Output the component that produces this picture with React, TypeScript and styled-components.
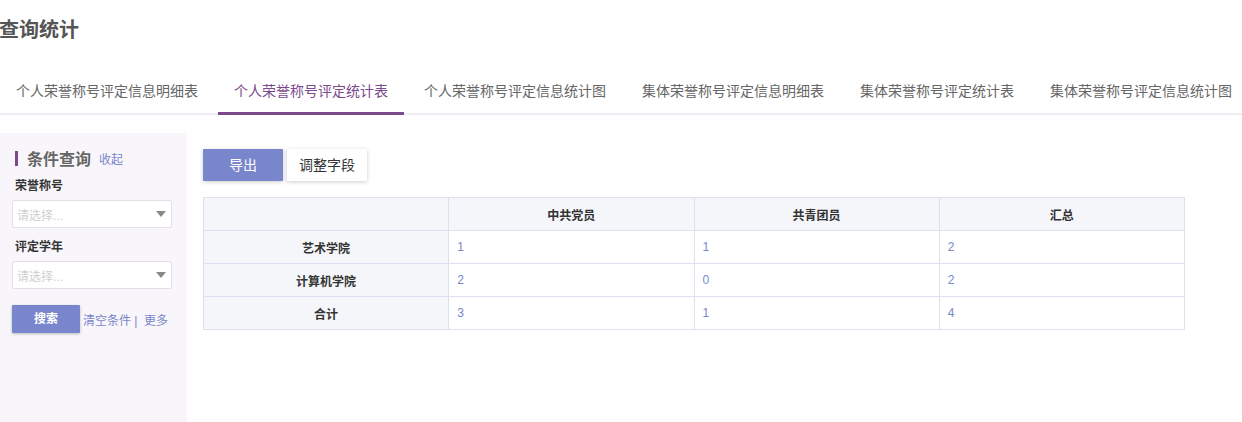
import styled, { createGlobalStyle } from 'styled-components';

const GlobalStyle = createGlobalStyle`
  html, body {
    margin: 0;
    padding: 0;
    background: #fff;
    font-family: "Liberation Sans", "Noto Sans CJK SC", sans-serif;
  }
  * { box-sizing: border-box; }
`;

const accent = '#7986cb';
const purple = '#7b4a8c';

const Page = styled.div`
  width: 1242px;
  height: 422px;
  overflow: hidden;
  display: flex;
  flex-direction: column;
`;

const Title = styled.h1`
  margin: 0;
  height: 60px;
  line-height: 60px;
  font-size: 20px;
  font-weight: bold;
  color: #555;
  margin-left: -1px;
`;

const TabBar = styled.div`
  margin-top: 9px;
  display: flex;
  border-bottom: 2px solid #f2ecf5;
`;

const Tab = styled.div<{ $active?: boolean }>`
  height: 46px;
  line-height: 44px;
  padding: 0 16px;
  margin-right: 4px;
  font-size: 14px;
  white-space: nowrap;
  color: ${(p) => (p.$active ? purple : '#666')};
  border-bottom: 3px solid ${(p) => (p.$active ? purple : 'transparent')};
  margin-bottom: -2px;
`;

const Body = styled.div`
  flex: 1;
  display: flex;
  margin-top: 18px;
`;

const Sidebar = styled.aside`
  width: 187px;
  flex-shrink: 0;
  background: #f8f6fa;
  padding: 16px 15px 0 12px;
`;

const SideTitle = styled.div`
  display: flex;
  align-items: center;
  height: 18px;
  padding-left: 3px;
`;

const Bar = styled.span`
  width: 3px;
  height: 15px;
  background: ${purple};
  margin-right: 9px;
`;

const SideHeading = styled.span`
  font-size: 16px;
  font-weight: bold;
  color: #666;
`;

const Link = styled.span`
  font-size: 12px;
  color: ${accent};
  margin-left: 8px;
`;

const Label = styled.div`
  margin-top: 10px;
  padding-left: 3px;
  line-height: 18px;
  font-size: 12px;
  font-weight: bold;
  color: #333;
`;

const Select = styled.div`
  margin-top: 5px;
  height: 28px;
  background: #fff;
  border: 1px solid #e3dfe8;
  border-radius: 2px;
  display: flex;
  align-items: center;
  justify-content: space-between;
  padding: 0 5px 0 4px;
  font-size: 12px;
  color: #cfcfcf;
`;

const Caret = styled.span`
  width: 0;
  height: 0;
  border-left: 5px solid transparent;
  border-right: 5px solid transparent;
  border-top: 6px solid #888;
`;

const ActionRow = styled.div`
  margin-top: 16px;
  display: flex;
  align-items: center;
`;

const SearchButton = styled.div`
  width: 68px;
  height: 28px;
  line-height: 28px;
  text-align: center;
  background: ${accent};
  color: #fff;
  font-size: 12px;
  font-weight: bold;
  border-radius: 1px;
  box-shadow: 0 1px 3px rgba(0, 0, 0, 0.25);
`;

const TextLink = styled.span`
  font-size: 12px;
  color: ${accent};
  margin-left: 3px;
  white-space: nowrap;
`;

const Main = styled.main`
  flex: 1;
  padding: 16px 0 0 16px;
`;

const Toolbar = styled.div`
  display: flex;
  gap: 4px;
`;

const Button = styled.div<{ $primary?: boolean }>`
  width: 80px;
  height: 32px;
  line-height: 32px;
  text-align: center;
  font-size: 14px;
  border-radius: 1px;
  background: ${(p) => (p.$primary ? accent : '#fff')};
  color: ${(p) => (p.$primary ? '#fff' : '#333')};
  box-shadow: 0 1px 4px rgba(0, 0, 0, 0.2);
`;

const Table = styled.table`
  margin-top: 16px;
  width: 982px;
  border-collapse: collapse;
  table-layout: fixed;
  font-size: 12px;
`;

const Th = styled.th`
  height: 33px;
  border: 1px solid #dde0f1;
  background: #f5f6fa;
  color: #333;
  font-weight: bold;
  text-align: center;
  padding: 0;
`;

const RowHead = styled(Th)``;

const Td = styled.td`
  height: 33px;
  border: 1px solid #dde0f1;
  color: ${accent};
  padding: 0 8px;
  text-align: left;
`;

const rows = [
  { name: '艺术学院', values: [1, 1, 2] },
  { name: '计算机学院', values: [2, 0, 2] },
  { name: '合计', values: [3, 1, 4] },
];

const tabs = [
  '个人荣誉称号评定信息明细表',
  '个人荣誉称号评定统计表',
  '个人荣誉称号评定信息统计图',
  '集体荣誉称号评定信息明细表',
  '集体荣誉称号评定统计表',
  '集体荣誉称号评定信息统计图',
];

export default function App() {
  return (
    <Page>
      <GlobalStyle />
      <Title>查询统计</Title>
      <TabBar>
        {tabs.map((t, i) => (
          <Tab key={t} $active={i === 1}>
            {t}
          </Tab>
        ))}
      </TabBar>
      <Body>
        <Sidebar>
          <SideTitle>
            <Bar />
            <SideHeading>条件查询</SideHeading>
            <Link>收起</Link>
          </SideTitle>
          <Label>荣誉称号</Label>
          <Select>
            请选择...
            <Caret />
          </Select>
          <Label>评定学年</Label>
          <Select>
            请选择...
            <Caret />
          </Select>
          <ActionRow>
            <SearchButton>搜索</SearchButton>
            <TextLink>清空条件 |&nbsp;&nbsp;更多</TextLink>
          </ActionRow>
        </Sidebar>
        <Main>
          <Toolbar>
            <Button $primary>导出</Button>
            <Button>调整字段</Button>
          </Toolbar>
          <Table>
            <thead>
              <tr>
                <Th />
                <Th>中共党员</Th>
                <Th>共青团员</Th>
                <Th>汇总</Th>
              </tr>
            </thead>
            <tbody>
              {rows.map((r) => (
                <tr key={r.name}>
                  <RowHead as="td">{r.name}</RowHead>
                  {r.values.map((v, i) => (
                    <Td key={i}>{v}</Td>
                  ))}
                </tr>
              ))}
            </tbody>
          </Table>
        </Main>
      </Body>
    </Page>
  );
}
